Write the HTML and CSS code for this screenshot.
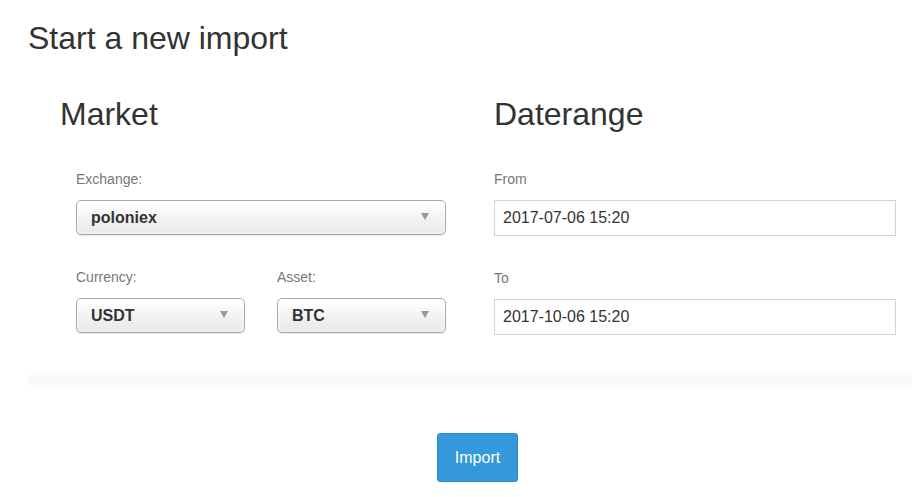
FILE: index.html
```html
<!DOCTYPE html>
<html>
<head>
<meta charset="utf-8">
<title>Start a new import</title>
<link rel="stylesheet" href="styles.css">
</head>
<body>
<div class="page">
  <h1 class="title">Start a new import</h1>
  <div class="columns">
    <section class="col col-market">
      <h2 class="section-title">Market</h2>
      <div class="fields">
        <div class="field">
          <label class="field-label">Exchange:</label>
          <div class="select"><span class="select-value">poloniex</span><span class="select-arrow"></span></div>
        </div>
        <div class="field-row">
          <div class="field">
            <label class="field-label">Currency:</label>
            <div class="select"><span class="select-value">USDT</span><span class="select-arrow"></span></div>
          </div>
          <div class="field">
            <label class="field-label">Asset:</label>
            <div class="select"><span class="select-value">BTC</span><span class="select-arrow"></span></div>
          </div>
        </div>
      </div>
    </section>
    <section class="col col-date">
      <h2 class="section-title">Daterange</h2>
      <div class="field">
        <label class="field-label">From</label>
        <div class="input">2017-07-06 15:20</div>
      </div>
      <div class="field">
        <label class="field-label">To</label>
        <div class="input">2017-10-06 15:20</div>
      </div>
    </section>
  </div>
  <div class="divider"></div>
  <div class="actions">
    <button class="btn-import" type="button">Import</button>
  </div>
</div>
</body>
</html>
```

FILE: styles.css
```css
html, body {
  margin: 0;
  padding: 0;
  background: #fff;
  overflow: hidden;
}
body {
  font-family: "Liberation Sans", Arial, sans-serif;
  color: #333;
}
.page {
  width: 899px;
  padding-left: 28px;
  padding-top: 20px;
}
.title {
  margin: 0;
  font-size: 32px;
  font-weight: normal;
  line-height: 36px;
}
.columns {
  display: flex;
  padding-left: 32px;
  margin-top: 40px;
}
.col-market {
  width: 386px;
  margin-right: 48px;
}
.col-date {
  width: 402px;
}
.section-title {
  margin: 0 0 37px 0;
  font-size: 32px;
  font-weight: normal;
  line-height: 36px;
}
.fields {
  padding-left: 16px;
}
.field {
  margin-bottom: 32px;
}
.field-row {
  display: flex;
  gap: 32px;
}
.field-row .field {
  flex: 1;
}
.field-label {
  display: block;
  font-size: 14px;
  line-height: 20px;
  color: #777;
  margin-bottom: 11px;
}
.select {
  box-sizing: border-box;
  height: 35px;
  display: flex;
  align-items: center;
  justify-content: space-between;
  padding: 0 16px 0 14px;
  border: 1px solid #aaa;
  border-radius: 5px;
  background: linear-gradient(#ffffff 10%, #f3f3f3 50%, #e8e8e8 100%);
  box-shadow: 0 0 3px #fff inset, 0 1px 1px rgba(0, 0, 0, 0.1);
}
.select-value {
  font-size: 16px;
  font-weight: bold;
  color: #333;
}
.select-arrow {
  width: 0;
  height: 0;
  border-left: 4.5px solid transparent;
  border-right: 4.5px solid transparent;
  border-top: 7px solid #999;
  margin-top: -2px;
}
.input {
  box-sizing: border-box;
  height: 36px;
  border: 1px solid #d4d4d4;
  padding: 0 8px;
  display: flex;
  align-items: center;
  font-size: 16px;
  color: #333;
}
.divider {
  height: 10px;
  background: #f9f9f9;
  margin-top: 8px;
}
.actions {
  display: flex;
  justify-content: center;
  margin-top: 48px;
}
.btn-import {
  width: 81px;
  height: 49px;
  background: #3498db;
  border: 1px solid #2e8ccc;
  border-radius: 3px;
  color: #fff;
  font-family: "Liberation Sans", Arial, sans-serif;
  font-size: 16px;
  padding: 0;
}
```
